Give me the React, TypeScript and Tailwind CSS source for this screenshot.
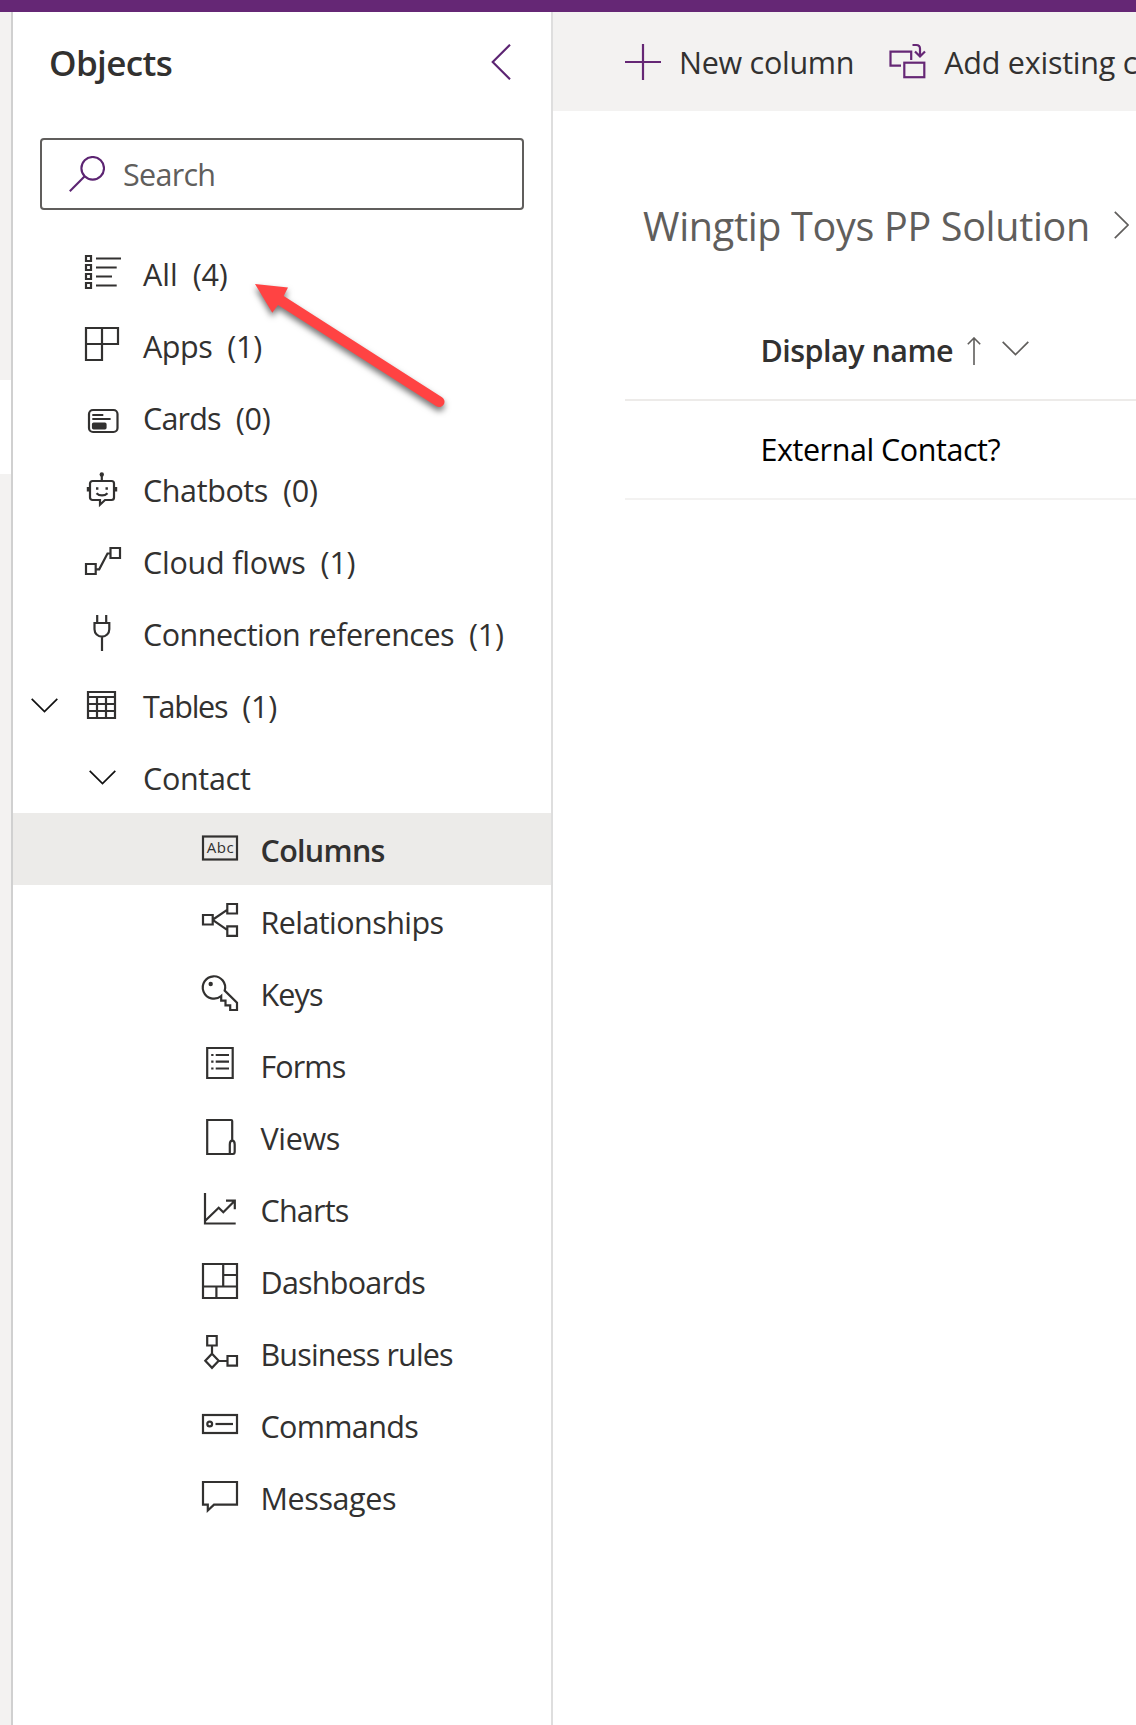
import type { ReactNode } from 'react';

type IconProps = { children: ReactNode; className?: string };

function Glyph({ children, className = 'text-[#323130]' }: IconProps) {
  return (
    <svg
      viewBox="0 0 36 36"
      fill="none"
      stroke="currentColor"
      strokeWidth="2.2"
      className={`h-9 w-9 shrink-0 overflow-visible ${className}`}
      aria-hidden="true"
    >
      {children}
    </svg>
  );
}

const AllIcon = (
  <Glyph>
    <path d="M1 1h5v5H1zM1 10h5v5H1zM1 19h5v5H1zM1 28h5v5H1z" />
    <path d="M11 3.5h25M11 12.5h20.7M11 21.5h16M11 30.5h20.7" />
  </Glyph>
);
const AppsIcon = (
  <Glyph>
    <path d="M1 1h32v16H1zM17 1v32H1V1" />
  </Glyph>
);
const CardsIcon = (
  <Glyph>
    <rect x="4" y="11" width="28.5" height="22" rx="4" />
    <path d="M7.3 16h11M7.3 20h18.3" />
    <rect x="8" y="24.7" width="12.5" height="4.6" rx="0.6" fill="currentColor" />
  </Glyph>
);
const ChatbotIcon = (
  <Glyph>
    <circle cx="16.8" cy="3.5" r="2.2" fill="currentColor" stroke="none" />
    <path d="M16.8 4v5" />
    <path d="M7.5 10h19a2.5 2.5 0 0 1 2.5 2.5v14a2.5 2.5 0 0 1-2.5 2.5H20l-5 4.7V29H7.5a2.5 2.5 0 0 1-2.5-2.5v-14A2.5 2.5 0 0 1 7.5 10z" />
    <path d="M3 16v4.5M31 16v4.5" strokeWidth="2.4" />
    <path d="M11 17.5h2.4M20.5 17.5h2.4" strokeWidth="2.4" />
    <path d="M11.5 22.2c3 3 8 3 11 0" />
  </Glyph>
);
const FlowIcon = (
  <Glyph>
    <path d="M1 21h9.7v10H1zM25.5 5H35v10h-9.5zM11 26.3h3.2L22.5 10.5h3" />
  </Glyph>
);
const PlugIcon = (
  <Glyph>
    <path d="M12.2 0v8M21.2 0v8M9.5 8h14.8v6.3a7.4 7.4 0 0 1-14.8 0zM17 21.5V36" />
  </Glyph>
);
const TableIcon = (
  <Glyph>
    <path d="M3 5h27v26H3zM3 10h27M3 17h27M3 24h27M12 10v21M21 10v21" />
  </Glyph>
);
const ColumnsIcon = (
  <Glyph>
    <rect x="1" y="5.5" width="34" height="23" />
    <text
      x="4.8"
      y="22.3"
      stroke="none"
      fill="currentColor"
      textLength="27"
      className="font-['Open_Sans'] text-[15px] font-normal"
    >
      Abc
    </text>
  </Glyph>
);
const RelationshipIcon = (
  <Glyph>
    <path d="M1 12h9.7v9.5H1zM25.3 1H35v9.5h-9.7zM25.3 23.3H35v9.5h-9.7zM11 16.5l14.5-9.8M11 17.2l14.5 10" />
  </Glyph>
);
const KeyIcon = (
  <Glyph>
    <path d="M22.7 15.6A11.2 11.2 0 1 0 19.2 21v4.7h4.3v4.6h4.7V35H35v-7.3L22.7 15.6z" />
    <circle cx="8.7" cy="9" r="2.2" fill="currentColor" stroke="none" />
  </Glyph>
);
const FormIcon = (
  <Glyph>
    <path d="M5.2 1h25.5v30H5.200zM13.700 8H27M13.700 14.700H27M13.700 21.500H27M9.200 8h2.300M9.200 14.700h2.300M9.200 21.500h2.300" />
  </Glyph>
);
const ViewIcon = (
  <Glyph>
    <path d="M27.8 35v-9.5c0-2.3.9-3.8 2.4-3.8s2.5 1.5 2.5 3.8v7c0 1.5-.6 2.5-1.7 2.5H5.2V1h24a1 1 0 0 1 1 1v19.7" />
  </Glyph>
);
const ChartIcon = (
  <Glyph>
    <path d="M3 2v30.5h30.7M3.5 29.5l13.2-12.7 4.6 4.4L32.5 10M24 9.7h8.8v8.5" />
  </Glyph>
);
const DashboardIcon = (
  <Glyph>
    <path d="M1 1h34v34H1zM21.2 1v22.5M1 23.5h34M21.2 12H35M14.4 23.5V35" />
  </Glyph>
);
const RuleIcon = (
  <Glyph>
    <path d="M5.2 1h9.5v9.5H5.2zM25.5 21H35v9.7h-9.5zM10 10.5v8M17 26h8.5M10 18.7l6.700 7.100-6.700 7-6.700-7z" />
  </Glyph>
);
const CommandIcon = (
  <Glyph>
    <rect x="1" y="8" width="34" height="18" />
    <circle cx="7.7" cy="17" r="2.4" />
    <path d="M13.5 17H31" />
  </Glyph>
);
const MessageIcon = (
  <Glyph>
    <path d="M1 3h34v22.7H12L5.8 31.5v-5.8H1z" />
  </Glyph>
);

function ChevronDown({ className }: { className: string }) {
  return (
    <svg
      viewBox="0 0 27 15"
      fill="none"
      stroke="currentColor"
      strokeWidth="1.7"
      className={`h-[15px] w-[27px] shrink-0 ${className}`}
      aria-hidden="true"
    >
      <path d="M.7.900l12.800 12.700L26.300.900" />
    </svg>
  );
}

type Item = { label: string; tracking: string; icon?: ReactNode; count?: string; expanded?: boolean };

const objects: Item[] = [
  { label: 'All', tracking: 'tracking-normal', icon: AllIcon, count: '(4)' },
  { label: 'Apps', tracking: 'tracking-[-0.45px]', icon: AppsIcon, count: '(1)' },
  { label: 'Cards', tracking: 'tracking-[-0.82px]', icon: CardsIcon, count: '(0)' },
  { label: 'Chatbots', tracking: 'tracking-[-0.4px]', icon: ChatbotIcon, count: '(0)' },
  { label: 'Cloud flows', tracking: 'tracking-[-0.22px]', icon: FlowIcon, count: '(1)' },
  { label: 'Connection references', tracking: 'tracking-[-0.51px]', icon: PlugIcon, count: '(1)' },
  { label: 'Tables', tracking: 'tracking-[-1.25px]', icon: TableIcon, count: '(1)', expanded: true },
];

const contactItems: (Item & { selected?: boolean })[] = [
  { label: 'Columns', tracking: 'tracking-[-0.7px]', icon: ColumnsIcon, selected: true },
  { label: 'Relationships', tracking: 'tracking-[-0.57px]', icon: RelationshipIcon },
  { label: 'Keys', tracking: 'tracking-[-0.9px]', icon: KeyIcon },
  { label: 'Forms', tracking: 'tracking-[-0.9px]', icon: FormIcon },
  { label: 'Views', tracking: 'tracking-[-0.35px]', icon: ViewIcon },
  { label: 'Charts', tracking: 'tracking-[-0.8px]', icon: ChartIcon },
  { label: 'Dashboards', tracking: 'tracking-[-0.75px]', icon: DashboardIcon },
  { label: 'Business rules', tracking: 'tracking-[-0.84px]', icon: RuleIcon },
  { label: 'Commands', tracking: 'tracking-[-0.67px]', icon: CommandIcon },
  { label: 'Messages', tracking: 'tracking-[-0.4px]', icon: MessageIcon },
];

function PointerArrow() {
  return (
    <svg
      viewBox="0 0 210 140"
      className="pointer-events-none absolute top-[280px] left-[245px] h-[140px] w-[210px] overflow-visible drop-shadow-[0px_4px_3px_rgba(0,0,0,0.55)]"
      aria-hidden="true"
    >
      <path d="M10 4l33 3.500-4.300 8.500 158.300 101.300a5.300 5.300 0 0 1-5.600 9L33 24.900l-5.700 7.800z" fill="#ff4343" />
    </svg>
  );
}

function Sidebar() {
  return (
    <aside className="flex w-[540px] shrink-0 flex-col border-r-2 border-[#dedede] bg-white">
      <div className="flex h-[100px] items-center justify-between pr-[40px] pl-[36px]">
        <h2 className="text-[35px] leading-none font-semibold tracking-[-0.62px]">Objects</h2>
        <svg viewBox="0 0 20 36" fill="none" stroke="#5c2472" strokeWidth="2.1" className="h-9 w-5" aria-hidden="true">
          <path d="M19 .7L1.700 18 19 35.300" />
        </svg>
      </div>
      <div className="mx-[27px] mt-[26px] flex h-[72px] items-center rounded-[4px] border-2 border-[#605e5c] pl-[27px] text-[#605e5c]">
        <svg viewBox="0 0 36 36" fill="none" stroke="#5c2472" strokeWidth="2.1" className="h-9 w-9" aria-hidden="true">
          <circle cx="23.7" cy="12.3" r="11.3" />
          <path d="M15.700 20.300L.8 35.200" />
        </svg>
        <span className="pl-[18px] tracking-[-0.7px]">Search</span>
      </div>
      <nav className="pt-[27px]">
        {objects.map((o) => (
          <div key={o.label} className="flex h-[72px] items-center pl-[18px]">
            <span className="w-[54px] shrink-0">
              {o.expanded && <ChevronDown className="text-[#111]" />}
            </span>
            {o.icon}
            <span className={`pt-[3px] pl-[22px] whitespace-nowrap ${o.tracking}`}>{o.label}</span>
            <span className="pt-[3px] pl-[15px] tracking-[-0.22px]">{o.count}</span>
          </div>
        ))}
        <div className="flex h-[72px] items-center pl-[76px]">
          <ChevronDown className="mt-px text-[#111]" />
          <span className="pt-[3px] pl-[27px] tracking-[-0.3px]">Contact</span>
        </div>
        {contactItems.map((c) => (
          <div
            key={c.label}
            className={`flex h-[72px] items-center pl-[189px] ${c.selected ? 'bg-[#ecebe9] font-semibold' : ''}`}
          >
            {c.icon}
            <span className={`pt-[3px] pl-[22.5px] whitespace-nowrap ${c.tracking}`}>{c.label}</span>
          </div>
        ))}
      </nav>
    </aside>
  );
}

function CommandBar() {
  return (
    <div className="flex h-[99px] items-center overflow-hidden bg-[#f3f2f1] pl-[72px] whitespace-nowrap">
      <Glyph className="text-[#652775]">
        <path d="M18 0v36M0 18h36" />
      </Glyph>
      <span className="pt-px pl-[18px] tracking-[-0.27px]">New column</span>
      <Glyph className="ml-[35px] text-[#652775]">
        <path d="M12 21.7H1.500v-14h20.700V16" />
        <rect x="15.3" y="18.7" width="20" height="14.5" />
        <path d="M23.5 1h3.8c2.200 0 3.700 1.500 3.700 3.700v7.500M26 7.500l5 5 5-5" />
      </Glyph>
      <span className="pt-px pl-[19px] tracking-[-0.24px]">Add existing column</span>
    </div>
  );
}

export default function App() {
  return (
    <div className="relative flex h-[1725px] w-[1136px] flex-col overflow-hidden bg-white font-['Open_Sans','Noto_Sans',sans-serif] text-[30.5px] leading-none text-[#323130]">
      <header className="h-3 shrink-0 bg-[#652775]" />
      <div className="flex min-h-0 flex-1">
        <div className="flex w-[13px] shrink-0 flex-col border-r-2 border-[#d0d0d0] bg-[#f3f2f1] pt-[368px]">
          <div className="h-[94px] bg-white" />
        </div>
        <Sidebar />
        <main className="flex min-w-0 flex-1 flex-col">
          <CommandBar />
          <div className="flex h-[192px] shrink-0 items-start pt-[96px] pl-[90px] whitespace-nowrap text-[#605e5c]">
            <span className="text-[39.5px] leading-none tracking-[-0.31px]">Wingtip Toys PP Solution</span>
            <svg
              viewBox="0 0 15 28"
              fill="none"
              stroke="currentColor"
              strokeWidth="1.7"
              className="mt-[4px] ml-[24px] h-7 w-[15px] shrink-0"
              aria-hidden="true"
            >
              <path d="M.8.800L14 14 .8 27.200" />
            </svg>
          </div>
          <div className="ml-[72px] flex h-[98px] shrink-0 items-center border-b-2 border-[#edebe9] pl-[135.5px]">
            <span className="pb-px font-semibold tracking-[-0.53px]">Display name</span>
            <svg
              viewBox="0 0 14 28"
              fill="none"
              stroke="#605e5c"
              strokeWidth="1.6"
              className="mb-px ml-[14px] h-7 w-[14px]"
              aria-hidden="true"
            >
              <path d="M7 1v27M.8 7.300L7 1l6.200 6.300" />
            </svg>
            <ChevronDown className="mb-[6px] ml-[21px] text-[#605e5c]" />
          </div>
          <div className="ml-[72px] flex h-[99px] shrink-0 items-center border-b-2 border-[#f3f2f1] pl-[135.5px] text-black">
            <span className="tracking-[-0.45px]">External Contact?</span>
          </div>
        </main>
      </div>
      <PointerArrow />
    </div>
  );
}
